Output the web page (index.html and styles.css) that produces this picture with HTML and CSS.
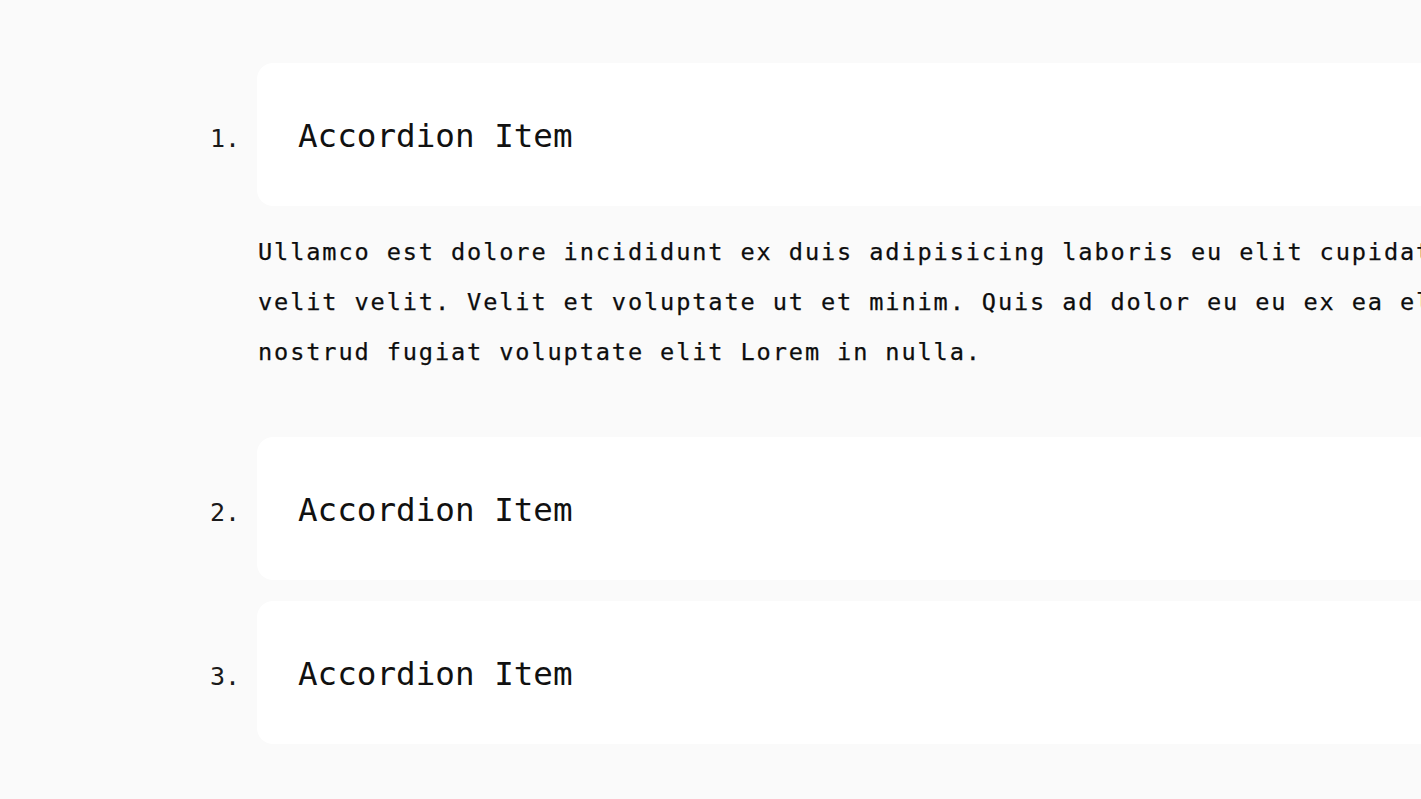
FILE: index.html
```html
<!DOCTYPE html>
<html lang="en">
<head>
<meta charset="utf-8">
<title>Accordion</title>
<link rel="stylesheet" href="styles.css">
</head>
<body>
<ol class="accordion">
  <li class="item open">
    <div class="row">
      <span class="num">1.</span>
      <div class="card"><span class="title">Accordion Item</span></div>
    </div>
    <div class="panel">
      <p class="text">Ullamco est dolore incididunt ex duis adipisicing laboris eu elit cupidatat nisi velit velit. Velit et voluptate ut et minim. Quis ad dolor eu eu ex ea elit ex nostrud fugiat voluptate elit Lorem in nulla.</p>
    </div>
  </li>
  <li class="item">
    <div class="row">
      <span class="num">2.</span>
      <div class="card"><span class="title">Accordion Item</span></div>
    </div>
  </li>
  <li class="item">
    <div class="row">
      <span class="num">3.</span>
      <div class="card"><span class="title">Accordion Item</span></div>
    </div>
  </li>
</ol>
</body>
</html>
```
FILE: styles.css
```css
html, body {
  margin: 0;
  padding: 0;
}
body {
  background: #fafafa;
  color: #111;
  font-family: "DejaVu Sans Mono", monospace;
  overflow: hidden;
  width: 1421px;
  height: 799px;
}
.accordion {
  list-style: none;
  margin: 0;
  padding: 63px 0 0 210px;
  display: flex;
  flex-direction: column;
  gap: 21px;
  width: 1400px;
}
.item {
  display: flex;
  flex-direction: column;
}
.row {
  display: grid;
  grid-template-columns: 47px 1fr;
  align-items: baseline;
}
.num {
  font-size: 25px;
  color: #1a1a1a;
}
.card {
  background: #fff;
  border-radius: 16px;
  height: 143px;
  display: flex;
  align-items: center;
  padding-left: 41px;
}
.title {
  font-size: 32.6px;
  padding-top: 2px;
  color: #111;
}
.panel {
  padding: 21px 0 39px 48px;
}
.text {
  margin: 0;
  width: 1300px;
  font-size: 23.6px;
  letter-spacing: 1.88px;
  line-height: 50px;
  color: #0d0d0d;
  -webkit-text-stroke: 0.25px #0d0d0d;
}
```
